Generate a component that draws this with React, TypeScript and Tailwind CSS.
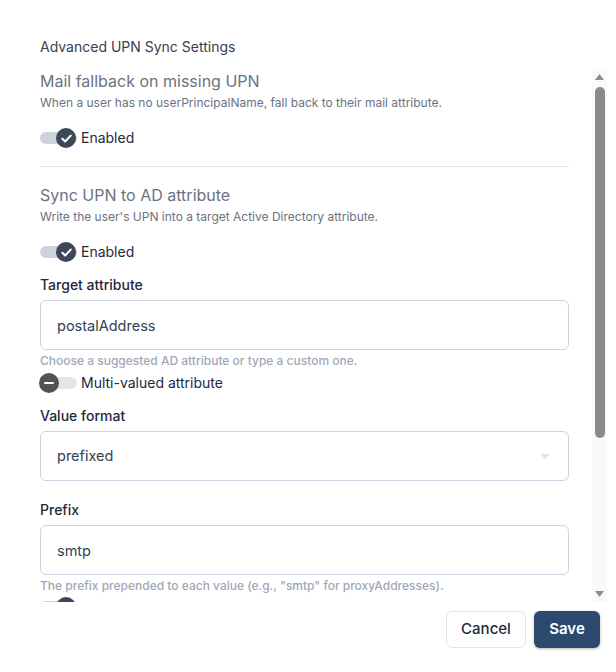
import React, { useState } from 'react'

const font = { fontFamily: 'Inter, "Noto Sans", sans-serif' }

type ToggleProps = { checked: boolean; label?: string; onChange: () => void }

const Toggle: React.FC<ToggleProps> = ({ checked, label, onChange }) => (
  <button type="button" onClick={onChange} className="flex items-center h-5 gap-[4px] text-left">
    <span className="relative inline-flex items-center w-[37px] h-5">
      <span className={`absolute left-0 right-0 h-3 rounded-full ${checked ? 'bg-[#cdd3dd]' : 'bg-[#e3e5e8]'}`} />
      <span
        className={`absolute top-0 w-5 h-5 rounded-full flex items-center justify-center ${
          checked ? 'left-[16px] bg-[#3c4759]' : 'left-[-1px] bg-[#505358]'
        }`}
      >
        {checked ? (
          <svg width="13" height="13" viewBox="0 0 12 12" fill="none">
            <path d="M2.2 6.2 L4.8 8.8 L9.9 3.3" stroke="white" strokeWidth="1.9" strokeLinecap="round" strokeLinejoin="round" />
          </svg>
        ) : (
          <span className="w-[10px] h-[2px] bg-white rounded-full" />
        )}
      </span>
    </span>
    {label && <span className="text-[14px] leading-5 text-[#1e293b]">{label}</span>}
  </button>
)

// classic scrollbar look, drawn beside the scrolling body
const Scrollbar: React.FC = () => (
  <div className="w-[15px] flex flex-col items-center bg-[#f9f9f9]">
    <svg className="mt-[5px]" width="9" height="6" viewBox="0 0 9 6">
      <path d="M4.5 0 L9 6 L0 6 Z" fill="#8c8c8c" />
    </svg>
    <div className="mt-[7px] w-[10px] h-[351px] rounded-full bg-[#8a8a8a]" />
    <div className="flex-1" />
    <svg className="mb-[5px]" width="9" height="6" viewBox="0 0 9 6">
      <path d="M0 0 L9 0 L4.5 6 Z" fill="#8c8c8c" />
    </svg>
  </div>
)

export default function App() {
  const [mailFallback, setMailFallback] = useState(true)
  const [syncUpn, setSyncUpn] = useState(true)
  const [multi, setMulti] = useState(false)
  const [writeChanged, setWriteChanged] = useState(true)
  const [target, setTarget] = useState('postalAddress')
  const [format, setFormat] = useState('prefixed')
  const [prefix, setPrefix] = useState('smtp')

  return (
    <div className="w-[616px] h-[672px] bg-white flex flex-col" style={font}>
      <div className="pt-[37px] pl-10 text-[14px] leading-5 text-[#374151]">Advanced UPN Sync Settings</div>

      <div className="mt-3 mr-[9px] h-[533px] flex">
        <div className="flex-1 overflow-hidden pl-10 pr-[23px]">
          {/* Mail fallback */}
          <h3 className="text-[16px] leading-6 text-[#6b7280]">Mail fallback on missing UPN</h3>
          <p className="mt-0.5 text-[12px] leading-4 text-[#6b7280]">
            When a user has no userPrincipalName, fall back to their mail attribute.
          </p>
          <div className="mt-[17px]">
            <Toggle checked={mailFallback} label="Enabled" onChange={() => setMailFallback(!mailFallback)} />
          </div>

          <div className="mt-[18px] h-px bg-[#e6e6f0]" />

          {/* Sync UPN */}
          <h3 className="mt-4 text-[16px] leading-6 text-[#6b7280]">Sync UPN to AD attribute</h3>
          <p className="mt-0.5 text-[12px] leading-4 text-[#6b7280]">
            Write the user's UPN into a target Active Directory attribute.
          </p>
          <div className="mt-[17px]">
            <Toggle checked={syncUpn} label="Enabled" onChange={() => setSyncUpn(!syncUpn)} />
          </div>

          <label className="block mt-[13px] text-[14px] leading-5 font-medium text-[#1e293b]">Target attribute</label>
          <input
            value={target}
            onChange={(e) => setTarget(e.target.value)}
            className="mt-[5px] w-full h-[50px] px-4 rounded-md border border-[#cdd3e0] text-[14.5px] text-[#334155] outline-none"
          />
          <p className="mt-[3px] text-[12px] leading-4 font-medium text-[#a0a8b8]">
            Choose a suggested AD attribute or type a custom one.
          </p>
          <div className="mt-1">
            <Toggle checked={multi} label="Multi-valued attribute" onChange={() => setMulti(!multi)} />
          </div>

          <label className="block mt-[13px] text-[14px] leading-5 font-medium text-[#1e293b]">Value format</label>
          <div className="relative mt-[5px]">
            <select
              value={format}
              onChange={(e) => setFormat(e.target.value)}
              className="w-full h-[50px] px-4 rounded-md border border-[#cdd3e0] bg-white text-[14.5px] text-[#334155] outline-none appearance-none"
            >
              <option value="plain">plain</option>
              <option value="prefixed">prefixed</option>
            </select>
            <svg className="absolute right-[19px] top-[23px] pointer-events-none" width="10" height="5" viewBox="0 0 10 5">
              <path d="M0 0 L10 0 L5 5 Z" fill="#e2e5ea" />
            </svg>
          </div>

          <label className="block mt-[19px] text-[14px] leading-5 font-medium text-[#1e293b]">Prefix</label>
          <input
            value={prefix}
            onChange={(e) => setPrefix(e.target.value)}
            className="mt-[5px] w-full h-[50px] px-4 rounded-md border border-[#cdd3e0] text-[14.5px] text-[#334155] outline-none"
          />
          <p className="mt-[3px] text-[12px] leading-4 font-medium text-[#a0a8b8]">
            The prefix prepended to each value (e.g., "smtp" for proxyAddresses).
          </p>
          <div className="mt-[3px] pb-6">
            <Toggle checked={writeChanged} onChange={() => setWriteChanged(!writeChanged)} />
          </div>
        </div>
        <Scrollbar />
      </div>

      <div className="flex justify-end gap-2 pt-[9px] pr-4">
        <button className="w-20 h-[37px] rounded-md border border-[#e2e5ea] bg-white text-[15px] font-medium text-[#1e293b]">
          Cancel
        </button>
        <button className="w-[66px] h-[37px] rounded-md bg-[#2b4a6e] text-[15px] font-semibold text-white shadow-[0_1px_3px_rgba(0,0,0,0.3)]">
          Save
        </button>
      </div>
    </div>
  )
}
